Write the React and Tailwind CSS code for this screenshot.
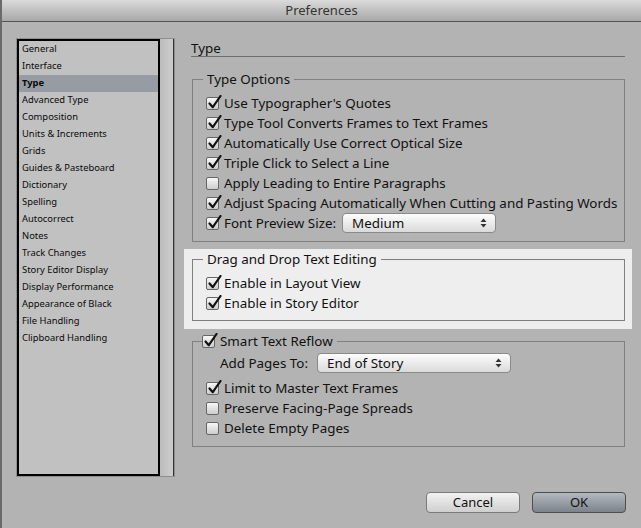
import React from 'react'

const FONT = { fontFamily: '"Noto Sans", "Open Sans", "DejaVu Sans", sans-serif' }

const sections = [
  'General', 'Interface', 'Type', 'Advanced Type', 'Composition', 'Units & Increments',
  'Grids', 'Guides & Pasteboard', 'Dictionary', 'Spelling', 'Autocorrect', 'Notes',
  'Track Changes', 'Story Editor Display', 'Display Performance', 'Appearance of Black',
  'File Handling', 'Clipboard Handling',
]

function Checkbox({ checked }) {
  return (
    <span className="relative inline-block w-[13px] h-[13px] shrink-0 rounded-[2px] border border-[#666] bg-gradient-to-b from-[#f7f7f7] to-[#cdcdcd]">
      {checked && (
        <svg className="absolute -top-[3px] left-[1px]" width="14" height="15" viewBox="0 0 14 15">
          <path d="M1.5 8.5 L4.8 12.2 L12.5 1" fill="none" stroke="#111" strokeWidth="2.2" strokeLinecap="round" strokeLinejoin="round" />
        </svg>
      )}
    </span>
  )
}

function Row({ checked, children }) {
  return (
    <div className="flex items-center h-[20px] pl-[3px] gap-[5px] leading-[18px] whitespace-nowrap">
      <Checkbox checked={checked} />
      <span>{children}</span>
    </div>
  )
}

function Select({ value, className }) {
  return (
    <div className={`flex items-center justify-between h-[20px] rounded-[4px] border border-[#8a8a8a] bg-gradient-to-b from-[#fdfdfd] to-[#dadada] pl-[9px] pr-[8px] ${className}`}>
      <span>{value}</span>
      <svg width="7" height="10" viewBox="0 0 7 10">
        <path d="M3.5 0.5 L6.5 4 L0.5 4 Z" fill="#333" />
        <path d="M3.5 9.5 L6.5 6 L0.5 6 Z" fill="#333" />
      </svg>
    </div>
  )
}

export default function App() {
  return (
    <div className="w-[641px] h-[528px] flex flex-col bg-[#b3b3b3] text-[13.4px] text-[#111] whitespace-nowrap border-l-2 border-[#6a6a6a] overflow-hidden" style={FONT}>
      {/* title bar */}
      <div className="h-[22px] shrink-0 flex items-center justify-center bg-gradient-to-b from-[#dadada] to-[#a8a8a8] border-b border-[#555] text-[13px] text-[#333]">
        Preferences
      </div>

      <div className="flex gap-[16px] pl-[14px] pt-[16px]">
        {/* section list */}
        <div className="flex w-[159px] h-[439px] shrink-0 border border-[#8e8e8e]">
          <div className="flex-1 border-2 border-black bg-[#c1c1c1] text-[9.4px] leading-[16px] text-[#0a0a0a]">
            {sections.map(s => (
              <div key={s} className={`h-[17px] pl-[3px] ${s === 'Type' ? 'bg-[#979ca4] font-bold' : ''}`}>{s}</div>
            ))}
          </div>
          <div className="w-[14px] bg-gradient-to-r from-[#bcbcbc] to-[#cdcdcd] border-r border-[#333]" />
        </div>

        {/* right side */}
        <div className="w-[434px] flex flex-col">
          <div className="mt-[2px] h-[16px] leading-[16px] border-b border-[#6e6e6e] box-content">Type</div>

          <fieldset className="mt-[14px] ml-[1px] border border-[#808080] pl-[10px] pr-[0px] pt-[6px] pb-[8px]">
            <legend className="px-[4px] leading-[16px]">Type Options</legend>
            <Row checked>Use Typographer's Quotes</Row>
            <Row checked>Type Tool Converts Frames to Text Frames</Row>
            <Row checked>Automatically Use Correct Optical Size</Row>
            <Row checked>Triple Click to Select a Line</Row>
            <Row>Apply Leading to Entire Paragraphs</Row>
            <Row checked>Adjust Spacing Automatically When Cutting and Pasting Words</Row>
            <div className="flex items-center h-[20px] pl-[3px] gap-[5px]">
              <Checkbox checked />
              <span>Font Preview Size:</span>
              <Select value="Medium" className="w-[154px] ml-[1px]" />
            </div>
          </fieldset>

          <div className="mt-[7px] -mx-[7px] px-[7px] pt-[2px] pb-[8px] bg-[#eeeeee]">
            <fieldset className="ml-[1px] border border-[#808080] pl-[10px] pr-[10px] pt-[6px] pb-[7px]">
              <legend className="px-[4px] leading-[16px]">Drag and Drop Text Editing</legend>
              <Row checked>Enable in Layout View</Row>
              <Row checked>Enable in Story Editor</Row>
            </fieldset>
          </div>

          <fieldset className="mt-[4px] ml-[1px] border border-[#808080] pl-[10px] pr-[10px] pt-[0px] pb-[8px]">
            <legend className="pr-[4px] leading-[16px]">
              <span className="flex items-center gap-[5px] -ml-[1px]">
                <Checkbox checked />
                <span>Smart Text Reflow</span>
              </span>
            </legend>
            <div className="flex items-center h-[24px] mt-[2px] pl-[17px] gap-[9px]">
              <span>Add Pages To:</span>
              <Select value="End of Story" className="w-[194px]" />
            </div>
            <div className="mt-[3px]">
              <Row checked>Limit to Master Text Frames</Row>
              <Row>Preserve Facing-Page Spreads</Row>
              <Row>Delete Empty Pages</Row>
            </div>
          </fieldset>
        </div>
      </div>

      {/* buttons */}
      <div className="flex justify-end gap-[12px] mt-auto mb-[15px] mr-[15px]">
        <button className="w-[94px] h-[21px] rounded-[4px] border border-[#7a7a7a] bg-gradient-to-b from-[#f2f2f2] to-[#cfcfcf] text-[13px] leading-none">
          Cancel
        </button>
        <button className="w-[94px] h-[21px] rounded-[4px] border border-[#4e4e4e] bg-gradient-to-b from-[#b4b9c0] to-[#7d838c] text-[13px] leading-none">
          OK
        </button>
      </div>
    </div>
  )
}
